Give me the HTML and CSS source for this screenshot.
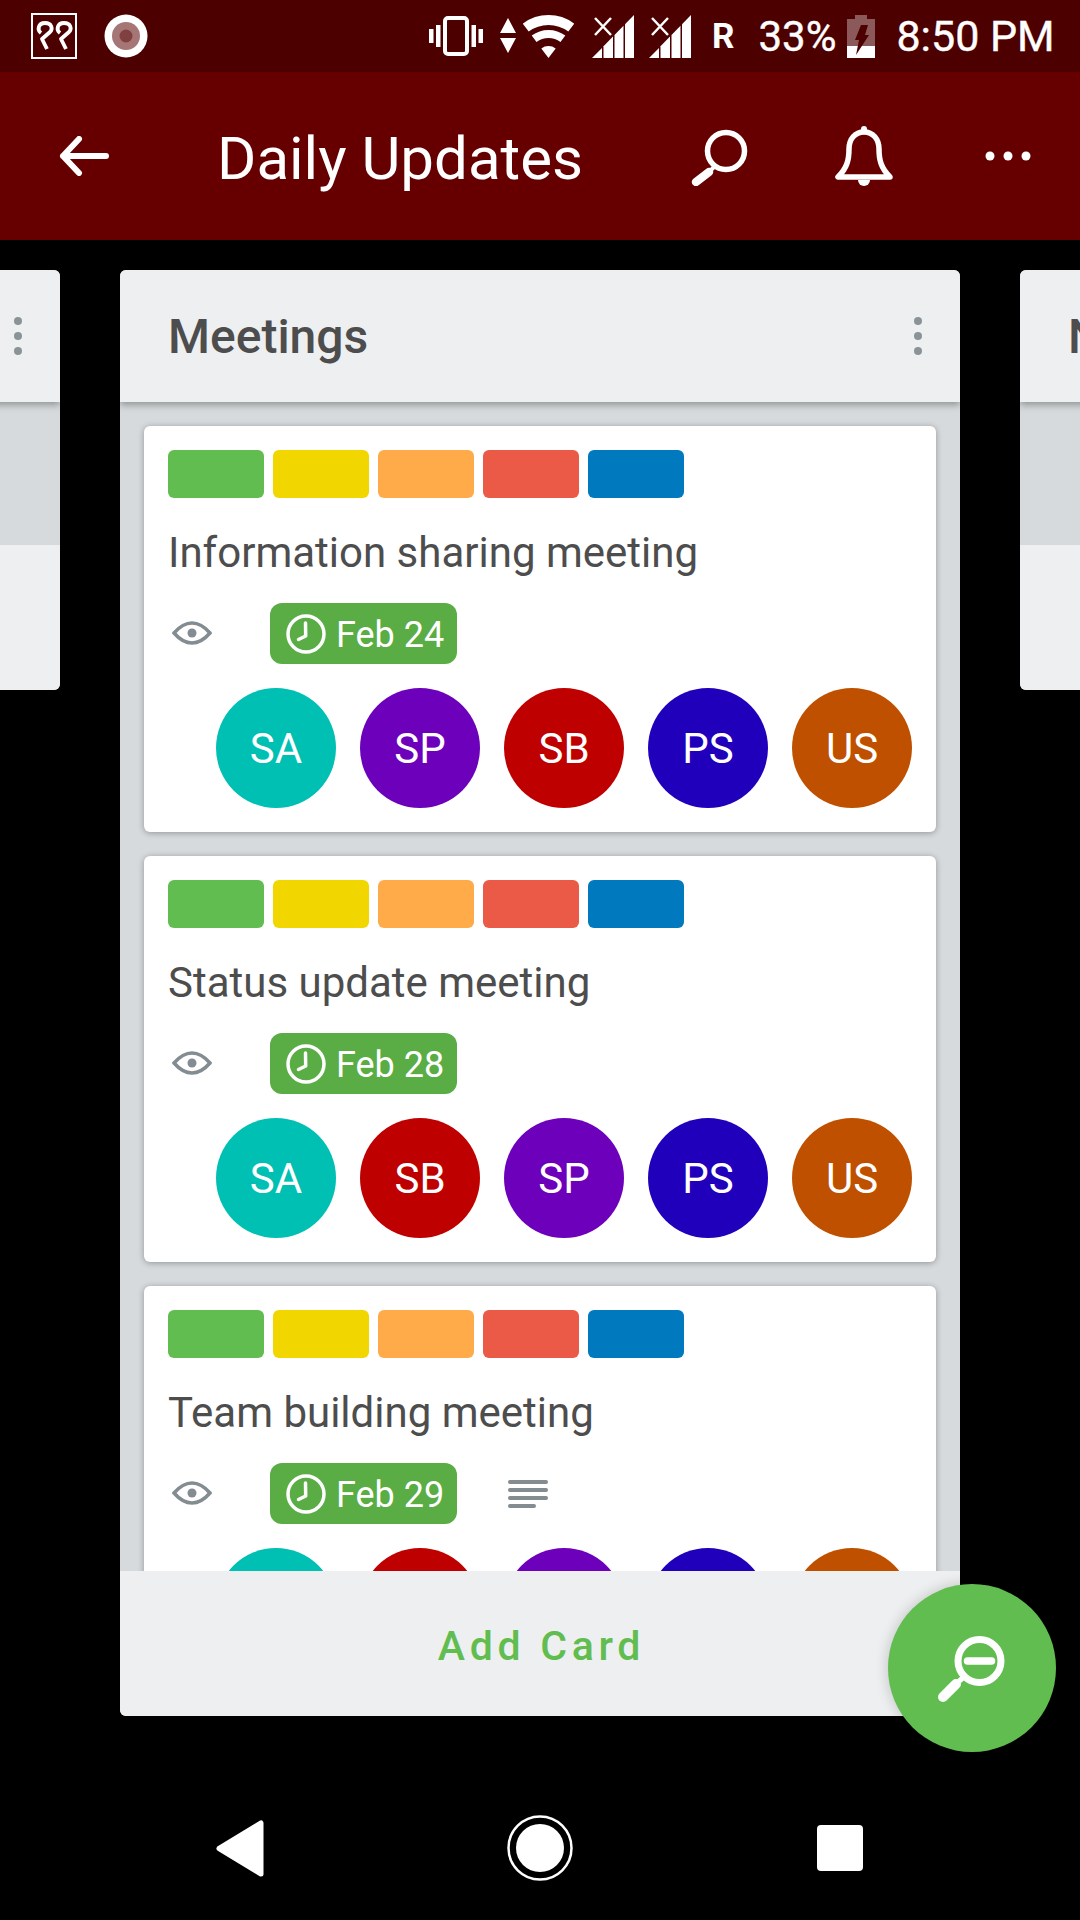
FILE: index.html
```html
<!DOCTYPE html>
<html lang="en">
<head>
    <meta charset="UTF-8">
    <meta name="viewport" content="width=device-width, initial-scale=1.0">
    <title>Daily Updates</title>

    <link rel="stylesheet" href="styles.css">
</head>
<body>
    <div class="screen">
        <div class="status-bar">
            <div class="note-box">
                <svg width="42" height="42" viewBox="0 0 42 42" fill="none" stroke="#fff" stroke-width="3.8" stroke-linejoin="round">
                    <path d="M8 18 C4 15 5 8 12 8 C19 8 20 14 17 17 L9 24 L14 34"/>
                    <path d="M27 18 C23 15 24 8 31 8 C38 8 39 14 36 17 L28 24 L33 34"/>
                </svg>
            </div>
            <svg class="record" width="44" height="44" viewBox="0 0 44 44">
                <circle cx="22" cy="22" r="21.5" fill="#fff"/>
                <circle cx="22" cy="22" r="14" fill="#a67676"/>
                <circle cx="22" cy="22" r="6.5" fill="#804040"/>
            </svg>

            <svg class="st-vibrate" width="54" height="42" viewBox="0 0 54 42" fill="#fff">
                <rect x="0" y="14" width="4.5" height="14"/>
                <rect x="7" y="10" width="4.5" height="22"/>
                <rect x="16" y="3" width="22" height="36" rx="3" fill="none" stroke="#fff" stroke-width="4"/>
                <rect x="42.5" y="10" width="4.5" height="22"/>
                <rect x="49.5" y="14" width="4.5" height="14"/>
            </svg>
            <svg class="st-arrows" width="16" height="36" viewBox="0 0 16 36" fill="#fff">
                <path d="M8 0 L16 15 H0 Z"/>
                <path d="M0 20 H16 L8 35 Z"/>
            </svg>
            <svg class="st-wifi" width="51" height="43" viewBox="0 0 51 43" fill="none" stroke="#fff">
                <path d="M2.7 12.6 A38 38 0 0 1 48.3 12.6" stroke-width="10"/>
                <path d="M11.1 23.8 A24 24 0 0 1 39.9 23.8" stroke-width="8"/>
                <path d="M25.5 43 L18.3 33.4 A12 12 0 0 1 32.7 33.4 Z" fill="#fff" stroke="none"/>
            </svg>
            <svg class="st-signal" width="42" height="43" viewBox="0 0 42 43" fill="#fff">
                <path d="M0 43 L10 33 V43 Z"/>
                <path d="M11.5 31.2 L21 21.5 V43 H11.5 Z"/>
                <path d="M22.5 20 L31.5 10.8 V43 H22.5 Z"/>
                <path d="M33 9.2 L42 0 V43 H33 Z"/>
                <path d="M3 3 L19 20 M19 3 L3 20" stroke="#fff" stroke-width="2.5" fill="none"/>
            </svg>
            <svg class="st-signal-2" width="42" height="43" viewBox="0 0 42 43" fill="#fff">
                <path d="M0 43 L10 33 V43 Z"/>
                <path d="M11.5 31.2 L21 21.5 V43 H11.5 Z"/>
                <path d="M22.5 20 L31.5 10.8 V43 H22.5 Z"/>
                <path d="M33 9.2 L42 0 V43 H33 Z"/>
                <path d="M3 3 L19 20 M19 3 L3 20" stroke="#fff" stroke-width="2.5" fill="none"/>
            </svg>
            <span class="st-roam">R</span>
            <span class="st-text st-percent">33%</span>
            <svg class="st-battery" width="28" height="43" viewBox="0 0 28 43">
                <path d="M8 0 H20 V4 H28 V31 H0 V4 H8 Z" fill="#fff" fill-opacity="0.35"/>
                <rect x="0" y="31" width="28" height="12" fill="#fff"/>
                <path d="M14 10 H21 L18 20 H22 L9 40 L12 25 H8 Z" fill="#4d0000"/>
            </svg>
            <span class="st-text st-time">8:50 PM</span>
        </div>

        <div class="app-bar">
            <svg class="back" width="50" height="40" viewBox="0 0 50 40" fill="none" stroke="#fff" stroke-width="6" stroke-linecap="round" stroke-linejoin="round">
                <path d="M47 20 H4 M20 3 L4 20 L20 37"/>
            </svg>
            <div class="board-title">Daily Updates</div>
            <svg class="search" width="60" height="60" viewBox="0 0 60 60" fill="none" stroke="#fff" stroke-linecap="round">
                <circle cx="36" cy="25" r="18.5" stroke-width="5.5"/>
                <path d="M24 41 L19 46" stroke-width="4"/>
                <path d="M19 46 L6 56" stroke-width="8.5"/>
            </svg>
            <svg class="bell" width="60" height="62" viewBox="0 0 60 62" fill="none" stroke="#fff" stroke-width="5.5" stroke-linejoin="round">
                <path d="M4 52 H56 C47 43 45 35 45 24 C45 14 39 7 30 7 C21 7 15 14 15 24 C15 35 13 43 4 52 Z"/>
                <circle cx="30" cy="4" r="3" fill="#fff" stroke="none"/>
                <path d="M24 55 H36 A6 6 0 0 1 24 55 Z" fill="#fff" stroke="none"/>
            </svg>
            <svg class="more" width="54" height="12" viewBox="0 0 54 12" fill="#fff">
                <circle cx="9" cy="6" r="4.5"/>
                <circle cx="27" cy="6" r="4.5"/>
                <circle cx="45" cy="6" r="4.5"/>
            </svg>
        </div>

        <div class="board">
            <div class="list list-side">
                <div class="list-head">
                    <span class="list-name"></span>
                    <span class="kebab"><i></i><i></i><i></i></span>
                </div>
                <div class="list-body"></div>
                <div class="list-foot"></div>
            </div>

            <div class="list list-main">
                <div class="list-head">
                    <span class="list-name">Meetings</span>
                    <span class="kebab"><i></i><i></i><i></i></span>
                </div>
                <div class="list-body">
                    <div class="card">
                        <div class="labels">
                            <span class="label green"></span>
                            <span class="label yellow"></span>
                            <span class="label orange"></span>
                            <span class="label red"></span>
                            <span class="label blue"></span>
                        </div>
                        <div class="card-title">Information sharing meeting</div>
                        <div class="card-meta">
                            <svg class="eye" width="40" height="24" viewBox="0 0 40 24" fill="none" stroke="#838c91" stroke-width="3.5">
                                <path d="M2 12 C9 4 14 2 20 2 C26 2 31 4 38 12 C31 20 26 22 20 22 C14 22 9 20 2 12 Z"/>
                                <circle cx="20" cy="12" r="4.5" fill="#838c91" stroke="none"/>
                            </svg>
                            <div class="due">
                                <svg width="40" height="40" viewBox="0 0 40 40" fill="none" stroke="#fff" stroke-width="3.5" stroke-linecap="round" stroke-linejoin="round">
                                    <circle cx="20" cy="20" r="18"/>
                                    <path d="M19.5 9 L19.7 22 L12.5 25.5"/>
                                </svg>
                                <span class="due-date">Feb 24</span>
                            </div>
                        </div>
                        <div class="members">
                            <span class="avatar teal">SA</span>
                            <span class="avatar purple">SP</span>
                            <span class="avatar crimson">SB</span>
                            <span class="avatar indigo">PS</span>
                            <span class="avatar rust">US</span>
                        </div>
                    </div>

                    <div class="card">
                        <div class="labels">
                            <span class="label green"></span>
                            <span class="label yellow"></span>
                            <span class="label orange"></span>
                            <span class="label red"></span>
                            <span class="label blue"></span>
                        </div>
                        <div class="card-title">Status update meeting</div>
                        <div class="card-meta">
                            <svg class="eye" width="40" height="24" viewBox="0 0 40 24" fill="none" stroke="#838c91" stroke-width="3.5">
                                <path d="M2 12 C9 4 14 2 20 2 C26 2 31 4 38 12 C31 20 26 22 20 22 C14 22 9 20 2 12 Z"/>
                                <circle cx="20" cy="12" r="4.5" fill="#838c91" stroke="none"/>
                            </svg>
                            <div class="due">
                                <svg width="40" height="40" viewBox="0 0 40 40" fill="none" stroke="#fff" stroke-width="3.5" stroke-linecap="round" stroke-linejoin="round">
                                    <circle cx="20" cy="20" r="18"/>
                                    <path d="M19.5 9 L19.7 22 L12.5 25.5"/>
                                </svg>
                                <span class="due-date">Feb 28</span>
                            </div>
                        </div>
                        <div class="members">
                            <span class="avatar teal">SA</span>
                            <span class="avatar crimson">SB</span>
                            <span class="avatar purple">SP</span>
                            <span class="avatar indigo">PS</span>
                            <span class="avatar rust">US</span>
                        </div>
                    </div>

                    <div class="card">
                        <div class="labels">
                            <span class="label green"></span>
                            <span class="label yellow"></span>
                            <span class="label orange"></span>
                            <span class="label red"></span>
                            <span class="label blue"></span>
                        </div>
                        <div class="card-title">Team building meeting</div>
                        <div class="card-meta">
                            <svg class="eye" width="40" height="24" viewBox="0 0 40 24" fill="none" stroke="#838c91" stroke-width="3.5">
                                <path d="M2 12 C9 4 14 2 20 2 C26 2 31 4 38 12 C31 20 26 22 20 22 C14 22 9 20 2 12 Z"/>
                                <circle cx="20" cy="12" r="4.5" fill="#838c91" stroke="none"/>
                            </svg>
                            <div class="due">
                                <svg width="40" height="40" viewBox="0 0 40 40" fill="none" stroke="#fff" stroke-width="3.5" stroke-linecap="round" stroke-linejoin="round">
                                    <circle cx="20" cy="20" r="18"/>
                                    <path d="M19.5 9 L19.7 22 L12.5 25.5"/>
                                </svg>
                                <span class="due-date">Feb 29</span>
                            </div>
                            <svg class="desc" width="40" height="28" viewBox="0 0 40 28" fill="#838c91">
                                <rect x="0" y="0" width="40" height="4" rx="2"/>
                                <rect x="0" y="8" width="40" height="4" rx="2"/>
                                <rect x="0" y="16" width="40" height="4" rx="2"/>
                                <rect x="0" y="24" width="28" height="4" rx="2"/>
                            </svg>
                        </div>
                        <div class="members">
                            <span class="avatar teal"></span>
                            <span class="avatar crimson"></span>
                            <span class="avatar purple"></span>
                            <span class="avatar indigo"></span>
                            <span class="avatar rust"></span>
                        </div>
                    </div>
                </div>
                <div class="list-foot">Add Card</div>
            </div>

            <div class="list list-side">
                <div class="list-head">
                    <span class="list-name">Next</span>
                </div>
                <div class="list-body"></div>
                <div class="list-foot"></div>
            </div>
        </div>

        <div class="nav-bar">
            <svg width="48" height="57" viewBox="0 0 48 57" fill="#fff" stroke="#fff" stroke-width="5" stroke-linejoin="round">
                <path d="M45 3 V54 L3 28.5 Z"/>
            </svg>
            <svg width="66" height="66" viewBox="0 0 66 66">
                <circle cx="33" cy="33" r="31.5" fill="none" stroke="#fff" stroke-width="2.5"/>
                <circle cx="33" cy="33" r="24" fill="#fff"/>
            </svg>
            <span class="nav-square"></span>
        </div>

        <div class="fab">
            <svg width="84" height="84" viewBox="0 0 84 84" fill="none" stroke="#fff" stroke-linecap="round">
                <circle cx="49.5" cy="35" r="21.5" stroke-width="7"/>
                <path d="M37.5 35 H61.5" stroke-width="7.5"/>
                <path d="M27 57 L35 50" stroke-width="5"/>
                <path d="M13 71 L26 58" stroke-width="10"/>
            </svg>
        </div>
    </div>
</body>
</html>
```

FILE: styles.css
```css
body {
    margin: 0;
    font-family: Roboto, "Liberation Sans", sans-serif;
    background-color: #000;
}

.screen {
    position: relative;
    width: 1080px;
    height: 1920px;
    overflow: hidden;
    display: flex;
    flex-direction: column;
}

/* status bar */
.status-bar {
    height: 72px;
    flex-shrink: 0;
    display: flex;
    align-items: center;
    padding-left: 31px;
    background-color: #4d0000;
    color: #fff;
}

.note-box {
    width: 46px;
    height: 46px;
    box-sizing: border-box;
    border: 2px solid #fff;
    display: flex;
}

.record {
    margin-left: 27px;
}

.st-vibrate {
    margin-left: 281px;
}

.st-arrows {
    margin-left: 17px;
}

.st-wifi {
    margin-left: 7px;
}

.st-signal {
    margin-left: 18px;
}

.st-signal-2 {
    margin-left: 15px;
}

.st-roam {
    margin-left: 21px;
    font-size: 35px;
    font-weight: 700;
}

.st-text {
    font-size: 42px;
    -webkit-text-stroke: 0.4px #fff;
}

.st-percent {
    margin-left: 24px;
}

.st-battery {
    margin-left: 11px;
}

.st-time {
    margin-left: 21px;
    font-size: 43px;
}

/* app bar */
.app-bar {
    height: 168px;
    flex-shrink: 0;
    display: flex;
    align-items: center;
    padding-left: 59px;
    padding-right: 45px;
    background-color: #660000;
    color: #fff;
}

.board-title {
    margin: 4px 0 0 108px;
    font-size: 60px;
}

.search {
    margin-left: auto;
}

.bell {
    margin-left: 84px;
}

.more {
    margin-left: 87px;
}

/* board */
.board {
    flex: 1;
    min-height: 0;
    display: flex;
    justify-content: center;
    align-items: flex-start;
    gap: 60px;
    padding: 30px 0 60px;
}

.list {
    width: 840px;
    flex-shrink: 0;
    display: flex;
    flex-direction: column;
    border-radius: 6px;
    overflow: hidden;
    background-color: #d6dadc;
}

.list-main {
    height: 100%;
}

.list-head {
    position: relative;
    height: 132px;
    flex-shrink: 0;
    display: flex;
    align-items: center;
    justify-content: space-between;
    padding: 0 38px 0 48px;
    background-color: #edeff0;
    box-shadow: 0 3px 7px rgba(0, 0, 0, 0.32);
}

.list-name {
    font-size: 48px;
    font-weight: 500;
    color: #4d4d4d;
}

.kebab {
    display: flex;
    flex-direction: column;
    gap: 7px;
}

.kebab i {
    width: 8px;
    height: 8px;
    border-radius: 50%;
    background-color: #8a9398;
}

.list-body {
    flex: 1;
    min-height: 0;
    overflow: hidden;
    display: flex;
    flex-direction: column;
    gap: 24px;
    padding: 24px;
}

.list-side .list-body {
    height: 143px;
    box-sizing: border-box;
    flex: none;
}

.list-foot {
    height: 145px;
    flex-shrink: 0;
    box-sizing: border-box;
    padding: 4px 0 0 3px;
    display: flex;
    align-items: center;
    justify-content: center;
    background-color: #edeff0;
    color: #61bd4f;
    font-size: 41px;
    font-weight: 500;
    letter-spacing: 4.7px;
}

/* cards */
.card {
    height: 406px;
    flex-shrink: 0;
    box-sizing: border-box;
    padding: 24px;
    border-radius: 6px;
    background-color: #fff;
    box-shadow: 0 1px 6px rgba(0, 0, 0, 0.32);
}

.labels {
    display: flex;
    gap: 9px;
}

.label {
    width: 96px;
    height: 48px;
    border-radius: 6px;
}

.green { background-color: #61bd4f; }
.yellow { background-color: #f2d600; }
.orange { background-color: #ffab4a; }
.red { background-color: #eb5a46; }
.blue { background-color: #0079bf; }

.card-title {
    height: 57px;
    margin: 26px 0 22px;
    font-size: 42px;
    line-height: 57px;
    color: #4d4d4d;
}

.card-meta {
    height: 61px;
    display: flex;
    align-items: center;
}

.eye {
    margin: 0 0 2px 4px;
}

.due {
    height: 61px;
    margin-left: 58px;
    padding: 0 13px 0 16px;
    display: flex;
    align-items: center;
    gap: 10px;
    border-radius: 12px;
    background-color: #5aac44;
    color: #fff;
    font-size: 36px;
}

.due-date {
    padding-top: 3px;
}

.desc {
    margin-left: 51px;
}

.members {
    margin-top: 24px;
    display: flex;
    justify-content: flex-end;
    gap: 24px;
}

.avatar {
    width: 120px;
    height: 120px;
    border-radius: 50%;
    display: flex;
    align-items: center;
    justify-content: center;
    color: #fff;
    font-size: 42px;
}

.teal { background-color: #00bfb3; }
.purple { background-color: #6c00bb; }
.crimson { background-color: #bf0000; }
.indigo { background-color: #2000bb; }
.rust { background-color: #bf5000; }

/* navigation bar */
.nav-bar {
    height: 144px;
    flex-shrink: 0;
    box-sizing: border-box;
    padding: 0 90px;
    display: grid;
    grid-template-columns: repeat(3, 300px);
    align-items: center;
    justify-items: center;
}

.nav-square {
    width: 46px;
    height: 46px;
    border-radius: 4px;
    background-color: #fff;
}

.fab {
    position: absolute;
    left: 888px;
    top: 1584px;
    width: 168px;
    height: 168px;
    border-radius: 50%;
    display: flex;
    align-items: center;
    justify-content: center;
    background-color: #61bd4f;
    box-shadow: 0 0 14px rgba(0, 0, 0, 0.2);
}
```
